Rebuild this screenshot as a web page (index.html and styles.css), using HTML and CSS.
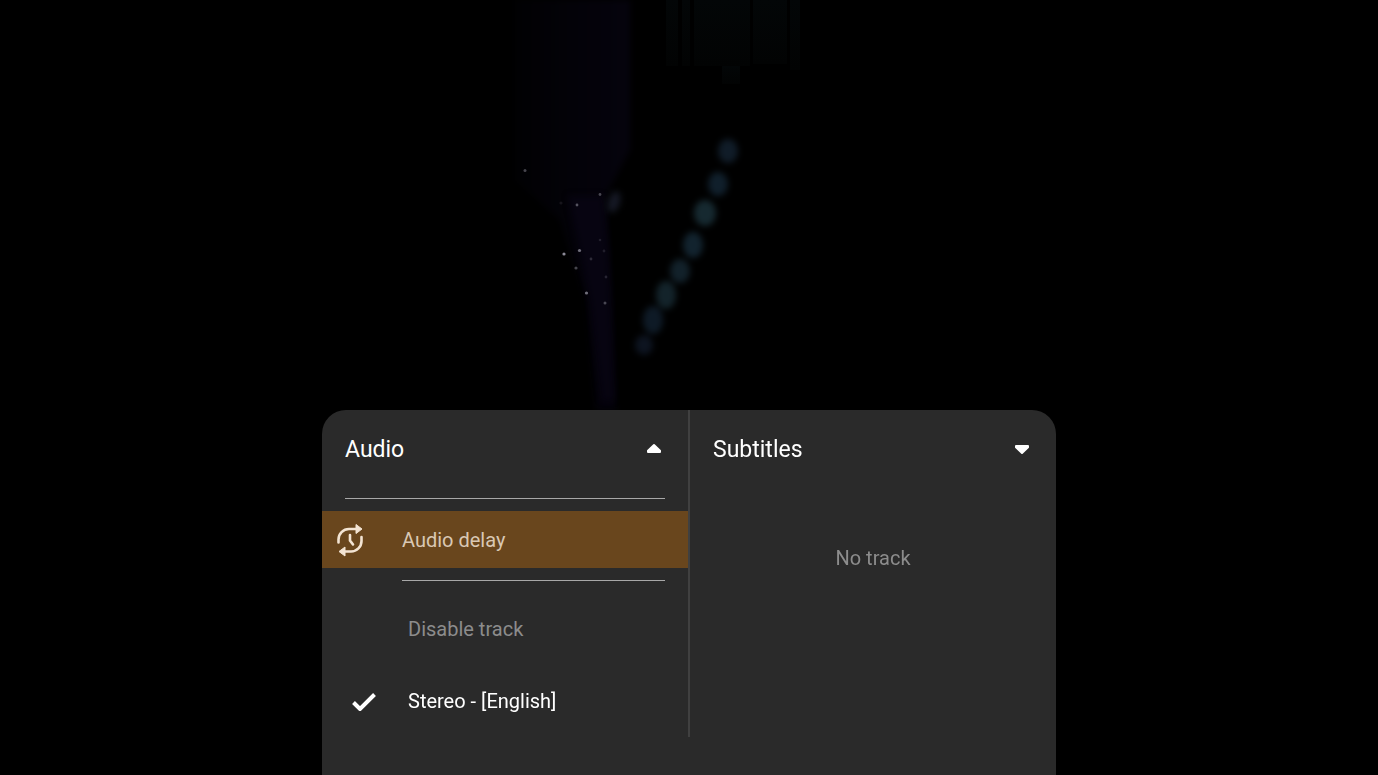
FILE: index.html
```html
<!DOCTYPE html>
<html lang="en">

<head>
    <meta charset="UTF-8">
    <meta name="viewport" content="width=device-width, initial-scale=1.0">
    <title>Player - Audio and subtitles</title>
    <link rel="stylesheet" href="styles.css">
</head>

<body>
    <!-- Video frame behind the panel -->
    <svg class="video" viewBox="0 0 1378 775" preserveAspectRatio="xMidYMid slice" aria-hidden="true">
        <defs>
            <filter id="soft" x="-50%" y="-50%" width="200%" height="200%" color-interpolation-filters="sRGB">
                <feGaussianBlur stdDeviation="3" />
            </filter>
            <linearGradient id="curtain" x1="0" x2="1" y1="0" y2="0">
                <stop offset="0" stop-color="#010103" />
                <stop offset="1" stop-color="#05030d" />
            </linearGradient>
            <linearGradient id="beam" x1="0" x2="0" y1="0" y2="1">
                <stop offset="0" stop-color="#030607" />
                <stop offset="1" stop-color="#020303" />
            </linearGradient>
        </defs>
        <path d="M515 0H630V150L606 195 612 300 616 410H596L586 300 560 220 515 180Z" fill="url(#curtain)" filter="url(#soft)" />
        <path d="M568 196H603L608 250 611 320 614 400H602L590 300Z" fill="#070411" filter="url(#soft)" />
        <g fill="url(#beam)">
            <rect x="666" y="0" width="12" height="66" />
            <rect x="682" y="0" width="8" height="66" />
            <rect x="694" y="0" width="56" height="66" />
            <rect x="753" y="0" width="34" height="64" />
            <rect x="790" y="0" width="10" height="70" />
            <rect x="722" y="66" width="18" height="18" />
        </g>
        <ellipse cx="614" cy="202" rx="6" ry="11" transform="rotate(18 614 202)" fill="#151824" filter="url(#soft)" />
        <g filter="url(#soft)">
            <ellipse cx="728" cy="151" rx="10" ry="12" fill="#101c28" />
            <ellipse cx="718" cy="184" rx="10" ry="12" fill="#101f2b" />
            <ellipse cx="705" cy="213" rx="11" ry="13" fill="#162930" />
            <ellipse cx="693" cy="245" rx="10" ry="13" fill="#12232e" />
            <ellipse cx="680" cy="271" rx="10" ry="12" fill="#12212a" />
            <ellipse cx="666" cy="295" rx="10" ry="14" fill="#13232a" />
            <ellipse cx="653" cy="320" rx="10" ry="14" fill="#0e1a26" />
            <ellipse cx="644" cy="345" rx="9" ry="10" fill="#0d1420" />
        </g>
        <g fill="#8b8996">
            <circle cx="564" cy="254" r="1.6" />
            <circle cx="579.500" cy="250.500" r="1.6" opacity=".8" />
            <circle cx="586.500" cy="293" r="1.6" opacity=".8" />
            <circle cx="576" cy="268" r="1.6" opacity=".5" />
            <circle cx="605" cy="303" r="1.5" opacity=".5" />
            <circle cx="600" cy="194.500" r="1.4" opacity=".5" />
            <circle cx="577" cy="205" r="1.4" opacity=".6" />
            <circle cx="525" cy="170.500" r="1.5" opacity=".5" />
            <circle cx="591" cy="259" r="1.4" opacity=".3" />
            <circle cx="606" cy="277" r="1.4" opacity=".25" />
            <circle cx="604" cy="251" r="1.4" opacity=".2" />
            <circle cx="600" cy="240" r="1.3" opacity=".2" />
            <circle cx="561" cy="203" r="1.6" opacity=".15" />
        </g>
    </svg>

    <main class="player">
        <div class="panel">
            <section class="tracks">
                <h2>
                    <button class="header" aria-expanded="true">
                        Audio
                        <svg class="arrow" viewBox="0 0 24 24" aria-hidden="true">
                            <path d="M12 7 18 12.800V14H6V12.800Z" />
                        </svg>
                    </button>
                </h2>
                <hr class="line">
                <button class="delay">
                    <svg class="delay-icon" viewBox="0 0 30 34" aria-hidden="true">
                        <path class="stroke" d="M3.500 19.500V16.500A10.500 10.500 0 0 1 14 6H21M26.500 14V18A10.500 10.500 0 0 1 16 28.500H9M15 12V17.500L18 21.500" />
                        <path class="fill" d="M21 1.500 27 6 21 10.500ZM10 24 4 28.500 10 33Z" />
                    </svg>
                    Audio delay
                </button>
                <hr class="line line-inset">
                <ul class="list">
                    <li><button class="track">Disable track</button></li>
                    <li>
                        <button class="track selected">
                            <svg class="check" viewBox="0 0 24 20" aria-hidden="true">
                                <path d="M1.500 11.500 8 18 22.500 3.500" />
                            </svg>
                            Stereo - [English]
                        </button>
                    </li>
                </ul>
            </section>

            <section class="tracks">
                <h2>
                    <button class="header" aria-expanded="false">
                        Subtitles
                        <svg class="arrow" viewBox="0 0 24 24" aria-hidden="true">
                            <path d="M12 15 18 9.200V8H6V9.200Z" />
                        </svg>
                    </button>
                </h2>
                <p class="empty">No track</p>
            </section>
        </div>
    </main>
</body>

</html>
```

FILE: styles.css
```css
* {
    box-sizing: border-box;
}

body {
    margin: 0;
    background-color: #000;
    color: #fff;
    font-family: Roboto, "Liberation Sans", sans-serif;
    font-size: 20px;
    line-height: 24px;
}

button {
    display: flex;
    align-items: center;
    width: 100%;
    border: none;
    background: none;
    color: inherit;
    font: inherit;
    text-align: left;
    cursor: pointer;
}

/* video */
.video {
    position: fixed;
    top: 0;
    left: 0;
    width: 100%;
    height: 100%;
}

/* bottom panel */
.player {
    position: relative;
    display: flex;
    flex-direction: column;
    justify-content: flex-end;
    align-items: center;
    min-height: 100vh;
}

.panel {
    display: grid;
    grid-template-columns: 1fr 2px 1fr;
    width: 100%;
    max-width: 734px;
    padding-bottom: 38px;
    border-radius: 24px 24px 0 0;
    background-color: #2a2a2a;
}

.panel::before {
    content: "";
    grid-column: 2;
    grid-row: 1;
    background-color: #404040;
}

.tracks {
    grid-row: 1;
    min-width: 0;
}

.tracks:last-child {
    grid-column: 3;
}

h2 {
    margin: 0;
    font-size: 23px;
    font-weight: 400;
}

.header {
    justify-content: space-between;
    height: 78px;
    padding: 2px 22px 0 23px;
}

.arrow {
    width: 24px;
    height: 24px;
    fill: #fff;
    stroke: #fff;
    stroke-width: 2;
    stroke-linejoin: round;
}

.line {
    height: 1px;
    margin: 10px 23px 12px;
    border: none;
    background-color: #a8a8a8;
}

.line-inset {
    margin: 12px 23px 12px 80px;
}

.delay {
    gap: 37px;
    height: 57px;
    padding: 0 13px;
    background-color: #69461d;
    color: #d9c8b4;
}

.delay-icon {
    width: 30px;
    height: 34px;
}

.delay-icon .stroke {
    fill: none;
    stroke: #f3e4d3;
    stroke-width: 2.6;
    stroke-linecap: round;
}

.delay-icon .fill {
    fill: #f3e4d3;
    stroke: #f3e4d3;
    stroke-linejoin: round;
}

.list {
    margin: 0;
    padding: 0;
    list-style: none;
}

.track {
    height: 72px;
    padding: 0 23px 0 86px;
    color: #8c8c8c;
}

.track.selected {
    gap: 32px;
    padding-left: 30px;
    color: #fff;
}

.check {
    width: 24px;
    height: 20px;
    fill: none;
    stroke: #fff;
    stroke-width: 4;
}

.empty {
    margin: 58px 0 0;
    color: #8c8c8c;
    text-align: center;
}
```
